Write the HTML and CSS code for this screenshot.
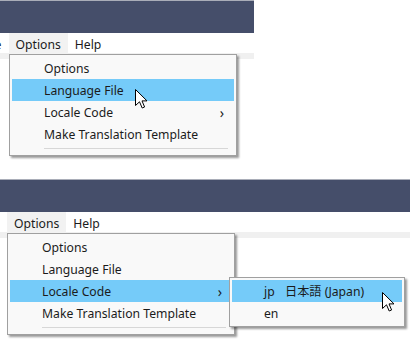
FILE: index.html
```html
<!DOCTYPE html>
<html lang="en">
<head>
    <meta charset="UTF-8">
    <title>Menu Localization</title>
    <link rel="stylesheet" href="styles.css">
</head>
<body>

    <!-- First capture: Language File hovered -->
    <div class="shot shot-top">
        <div class="titlebar"></div>
        <div class="menubar">
            <span class="mb-item">File</span>
            <span class="mb-item active">Options</span>
            <span class="mb-item">Help</span>
        </div>

        <div class="menu main-menu">
            <div class="item">Options</div>
            <div class="item hover">Language File</div>
            <div class="item">Locale Code <span class="arrow">&#8250;</span></div>
            <div class="item">Make Translation Template</div>
            <div class="sep"></div>
        </div>

        <svg class="cursor" width="13" height="20" viewBox="0 0 13 20">
            <path d="M0.5 0.5 L0.5 16.5 L4.5 12.8 L7.2 19 L9.6 18 L7 11.9 L12 11.9 Z" fill="#fff" stroke="#000" stroke-width="1"/>
        </svg>
    </div>

    <!-- Second capture: Locale Code submenu open -->
    <div class="shot shot-bottom">
        <div class="titlebar"></div>
        <div class="menubar">
            <span class="mb-item active">Options</span>
            <span class="mb-item">Help</span>
        </div>

        <div class="menu main-menu">
            <div class="item">Options</div>
            <div class="item">Language File</div>
            <div class="item hover">Locale Code <span class="arrow">&#8250;</span></div>
            <div class="item">Make Translation Template</div>
            <div class="sep"></div>
        </div>

        <div class="menu sub-menu">
            <div class="item hover"><span class="code">jp</span>日本語 (Japan)</div>
            <div class="item"><span class="code">en</span></div>
        </div>

        <svg class="cursor" width="13" height="20" viewBox="0 0 13 20">
            <path d="M0.5 0.5 L0.5 16.5 L4.5 12.8 L7.2 19 L9.6 18 L7 11.9 L12 11.9 Z" fill="#fff" stroke="#000" stroke-width="1"/>
        </svg>
    </div>

</body>
</html>
```

FILE: styles.css
```css
/* General Reset */
* {
    margin: 0;
    padding: 0;
    box-sizing: border-box;
}

body {
    font-family: 'Noto Sans', 'Noto Sans CJK JP', sans-serif;
    font-size: 12.2px;
    color: #1b1b1b;
    background-color: #fff;
    width: 410px;
    height: 340px;
    overflow: hidden;
}

.shot {
    position: relative;
    overflow: hidden;
}

.shot-top {
    width: 254px;
    height: 160px;
}

.shot-bottom {
    width: 410px;
    height: 161px;
    margin-top: 19px;
}

.titlebar {
    height: 33px;
    background-color: #454e6a;
    border-top: 1px solid #a9adb8;
}

.menubar {
    display: flex;
    height: 26px;
    background-color: #fff;
    border-bottom: 6px solid #f0f0f0;
}

.shot-top .menubar {
    margin-left: -25px;
}

.shot-bottom .menubar {
    padding-left: 7px;
}

.mb-item {
    height: 21px;
    line-height: 20px;
    padding: 2px 7px 0;
}

.mb-item.active {
    background-color: #f2f2f2;
}

/* Dropdown menus */
.menu {
    position: absolute;
    background-color: #f9f9f9;
    border: 1px solid #a0a0a0;
    box-shadow: 2px 2px 2px rgba(0, 0, 0, 0.4);
    padding: 2px;
}

.main-menu {
    width: 228px;
    padding-bottom: 6px;
}

.shot-top .main-menu {
    left: 9px;
    top: 54px;
}

.shot-bottom .main-menu {
    left: 7px;
    top: 54px;
}

.sub-menu {
    left: 229px;
    top: 98px;
    width: 176px;
}

.item {
    display: flex;
    align-items: center;
    height: 22px;
    padding-left: 32px;
    padding-right: 10px;
    white-space: nowrap;
}

.item.hover {
    background-color: #75cbf9;
}

.arrow {
    margin-left: auto;
    font-size: 14px;
}

.code {
    display: inline-block;
    width: 21px;
}

.sep {
    height: 1px;
    margin: 3px 6px 0 32px;
    background-color: #d7d7d7;
}

.cursor {
    position: absolute;
}

.shot-top .cursor {
    left: 135px;
    top: 89px;
}

.shot-bottom .cursor {
    left: 382px;
    top: 113px;
}
```
